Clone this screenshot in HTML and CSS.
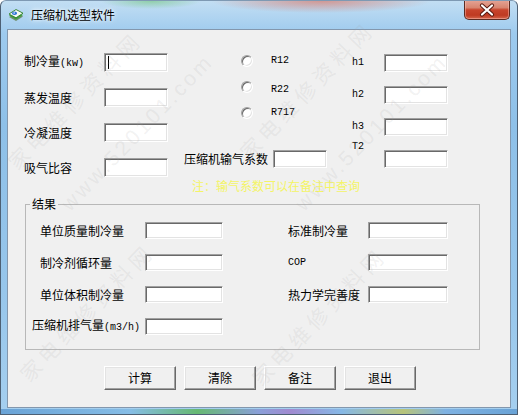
FILE: index.html
```html
<!DOCTYPE html>
<html lang="zh">
<head>
<meta charset="utf-8">
<title>压缩机选型软件</title>
<link rel="stylesheet" href="styles.css">
</head>
<body>
<div class="window">
  <div class="titlebar">
    <svg class="appicon" width="16" height="16" viewBox="0 0 16 16">
      <path d="M1 10 L8 6 L15 9.5 L8 14 Z" fill="#6f8f6f"/>
      <path d="M1 8.5 L8 4.5 L15 8 L8 12.5 Z" fill="#3f9f3a"/>
      <path d="M1 7 L8 2.5 L15 6.2 L8 10.8 Z" fill="#f4faf2" stroke="#2f7f2a" stroke-width="0.9"/>
      <ellipse cx="6.5" cy="6.3" rx="2.6" ry="1.8" fill="#2a6fd6"/>
      <ellipse cx="6.2" cy="6" rx="1" ry="0.7" fill="#cfe2ff"/>
    </svg>
    <span class="title">压缩机选型软件</span>
    <div class="close">
      <svg width="44" height="18" viewBox="0 0 44 18">
        <path d="M17 4.5 L27 13.5 M27 4.5 L17 13.5" stroke="#5a1a10" stroke-width="4.2" stroke-linecap="round"/>
        <path d="M17 4.5 L27 13.5 M27 4.5 L17 13.5" stroke="#ffffff" stroke-width="2.2" stroke-linecap="round"/>
      </svg>
    </div>
  </div>

  <div class="client">
    <div class="top">
      <div class="col-left">
        <div class="row"><span class="lbl">制冷量<span class="lat">(kw)</span></span><span class="input"><span class="caret"></span></span></div>
        <div class="row"><span class="lbl">蒸发温度</span><span class="input"></span></div>
        <div class="row"><span class="lbl">冷凝温度</span><span class="input"></span></div>
        <div class="row"><span class="lbl">吸气比容</span><span class="input"></span></div>
      </div>
      <div class="col-mid">
        <div class="radios">
          <div class="radio-row"><span class="radio"></span><span class="lat">R12</span></div>
          <div class="radio-row"><span class="radio"></span><span class="lat low">R22</span></div>
          <div class="radio-row"><span class="radio"></span><span class="lat">R717</span></div>
        </div>
        <div class="row mid-row"><span class="lbl">压缩机输气系数</span><span class="input"></span></div>
      </div>
      <div class="col-right">
        <div class="row"><span class="lbl lat">h1</span><span class="input"></span></div>
        <div class="row"><span class="lbl lat">h2</span><span class="input"></span></div>
        <div class="row"><span class="lbl lat">h3</span><span class="input"></span></div>
        <div class="row"><span class="lbl lat up">T2</span><span class="input"></span></div>
      </div>
    </div>

    <div class="note">注：输气系数可以在备注中查询</div>

    <fieldset class="group">
      <legend>结果</legend>
      <div class="rgrid">
        <span class="lbl">单位质量制冷量</span><span class="input w78"></span><span></span>
        <span class="lbl">标准制冷量</span><span class="input w80"></span>

        <span class="lbl">制冷剂循环量</span><span class="input w78"></span><span></span>
        <span class="lbl lat">COP</span><span class="input w80"></span>

        <span class="lbl">单位体积制冷量</span><span class="input w78"></span><span></span>
        <span class="lbl">热力学完善度</span><span class="input w80"></span>

        <span class="lbl shift">压缩机排气量<span class="lat">(m3/h)</span></span><span class="input w78"></span><span></span>
        <span></span><span></span>
      </div>
    </fieldset>

    <div class="buttons">
      <button class="btn">计算</button>
      <button class="btn">清除</button>
      <button class="btn">备注</button>
      <button class="btn">退出</button>
    </div>
  </div>

  <span class="wm cjk" style="left:18px;top:150px">家电维修资料网</span>
  <span class="wm" style="left:72px;top:192px">www.520101.com</span>
  <span class="wm cjk" style="left:250px;top:140px">家电维修资料网</span>
  <span class="wm" style="left:306px;top:192px">www.520101.com</span>
  <span class="wm cjk" style="left:30px;top:362px">家电维修资料网</span>
  <span class="wm cjk" style="left:262px;top:366px">家电维修资料网</span>
</div>
</body>
</html>
```

FILE: styles.css
```css
html, body {
  margin: 0;
  padding: 0;
  background: #ffffff;
}

.window {
  position: relative;
  width: 518px;
  height: 415px;
  box-sizing: border-box;
  border: 1px solid #4d6074;
  border-top-color: #7e99b3;
  border-radius: 6px 6px 0 0;
  overflow: hidden;
  display: flex;
  flex-direction: column;
  font-family: "Noto Sans CJK SC", sans-serif;
  font-size: 12px;
  color: #000;
  background:
    linear-gradient(90deg, #6aa3d6 0%, #86bde6 25%, #66b872 38%, #8a9fd8 50%, #a08ad0 56%, #86b8e6 66%, #b7c47a 78%, #7fb2e2 86%, #6aa3d6 100%) left bottom / 100% 5px no-repeat,
    radial-gradient(ellipse 110px 12px at 320px 0, rgba(214, 128, 116, 0.75), rgba(214, 128, 116, 0) 100%),
    radial-gradient(ellipse 50px 8px at 150px 0, rgba(110, 196, 120, 0.6), rgba(110, 196, 120, 0) 100%),
    linear-gradient(180deg, #c2def3 0%, #9dcaee 8%, #8ec0e8 30%, #97c6eb 70%, #a5cfef 100%);
}

/* Title bar */
.titlebar {
  height: 28px;
  flex: none;
  display: flex;
  align-items: center;
  padding-left: 7px;
}

.appicon {
  align-self: flex-start;
  margin-top: 6px;
  flex: none;
}

.title {
  margin-left: 7px;
  font-size: 12px;
  line-height: 14px;
  color: #000;
  text-shadow: 0 0 6px rgba(255, 255, 255, 0.95), 0 0 3px rgba(255, 255, 255, 0.9);
}

.close {
  align-self: flex-start;
  margin: -1px 7px 0 auto;
  width: 46px;
  height: 20px;
  box-sizing: border-box;
  border: 1px solid #5b2b22;
  border-top: none;
  border-radius: 0 0 5px 5px;
  background: linear-gradient(180deg, #e5a597 0%, #d88570 40%, #c8442c 52%, #bf3a22 80%, #d5664c 100%);
  box-shadow: inset 0 0 0 1px rgba(255, 200, 190, 0.45);
  display: flex;
  align-items: center;
  justify-content: center;
}

/* Client area */
.client {
  flex: 1;
  margin: 0 6px 6px 6px;
  border: 1px solid #8397ad;
  background: #f0f0f0;
  display: flex;
  flex-direction: column;
}

.lbl {
  font-size: 12px;
  line-height: 12px;
  white-space: nowrap;
}

.lat {
  font-family: "Liberation Mono", "DejaVu Sans Mono", monospace;
  font-size: 10px;
  line-height: 12px;
}

.input {
  display: block;
  box-sizing: border-box;
  background: #ffffff;
  border-top: 1px solid #a0a0a0;
  border-left: 1px solid #a0a0a0;
  border-right: 1px solid #ffffff;
  border-bottom: 1px solid #ffffff;
  box-shadow: inset 1px 1px 0 #696969, inset -1px -1px 0 #e3e3e3;
  flex: none;
}

.caret {
  display: block;
  width: 1px;
  height: 13px;
  margin: 2px 0 0 3px;
  background: #000;
}

.row {
  display: flex;
  align-items: center;
}

.top {
  display: flex;
  align-items: flex-start;
  padding: 23px 0 0 16px;
}

.col-left {
  width: 144px;
  display: flex;
  flex-direction: column;
  gap: 16px;
}

.col-left .lbl {
  width: 80px;
}

.col-left .input {
  width: 64px;
  height: 19px;
}

.col-mid {
  margin-left: 16px;
  width: 143px;
  display: flex;
  flex-direction: column;
}

.radios {
  margin-top: 2px;
  padding-left: 57px;
  display: flex;
  flex-direction: column;
  gap: 14px;
}

.radio-row {
  height: 12px;
  display: flex;
  align-items: center;
  gap: 18px;
}

.radio {
  display: block;
  width: 12px;
  height: 12px;
  box-sizing: border-box;
  border-radius: 50%;
  border: 1px solid;
  border-color: #a0a0a0 #ffffff #ffffff #a0a0a0;
  background: #ffffff;
  box-shadow: inset 1px 1px 0 #696969, inset -1px -1px 0 #e3e3e3;
}

.low {
  margin-top: 6px;
}

.mid-row {
  margin-top: 31px;
}

.mid-row .input {
  width: 54px;
  height: 18px;
  margin-left: 5px;
}

.col-right {
  margin-left: 25px;
  margin-top: 1px;
  display: flex;
  flex-direction: column;
  gap: 14px;
}

.col-right .lbl {
  width: 32px;
}

.col-right .input {
  width: 64px;
  height: 18px;
}

.col-right .up {
  align-self: flex-start;
  margin-top: -9px;
}

.note {
  margin: 3px 0 0 184px;
  height: 12px;
  line-height: 12px;
  font-size: 12px;
  color: #f4f466;
  white-space: nowrap;
}

/* Group box */
.group {
  margin: 6px 0 0 17px;
  width: 455px;
  box-sizing: border-box;
  padding: 12px 0 14px 0;
  border: 1px solid #b8b8b8;
  min-inline-size: 0;
}

.group legend {
  padding: 0 2px;
  margin-left: 4px;
  font-size: 12px;
  line-height: 12px;
}

.rgrid {
  display: grid;
  grid-template-columns: 105px 78px 65px 80px 80px;
  grid-auto-rows: 17px;
  row-gap: 15px;
  align-items: center;
  padding-left: 14px;
}

.rgrid .w78 {
  width: 78px;
  height: 17px;
}

.rgrid .w80 {
  width: 80px;
  height: 17px;
}

.rgrid .shift {
  margin-left: -8px;
}

/* Buttons */
.buttons {
  margin-top: 16px;
  padding-left: 96px;
  display: flex;
  gap: 8px;
}

.btn {
  width: 72px;
  height: 24px;
  box-sizing: border-box;
  padding: 0;
  margin: 0;
  font-family: "Noto Sans CJK SC", sans-serif;
  font-size: 12px;
  line-height: 12px;
  color: #000;
  background: #f0f0f0;
  border: 1px solid;
  border-color: #ffffff #696969 #696969 #ffffff;
  box-shadow: inset -1px -1px 0 #a0a0a0, inset 1px 1px 0 #e3e3e3;
  border-radius: 0;
}

/* Watermark overlay */
.wm {
  position: absolute;
  z-index: 5;
  pointer-events: none;
  white-space: nowrap;
  font-family: "Liberation Sans", sans-serif;
  font-size: 21px;
  line-height: 22px;
  letter-spacing: 3px;
  color: rgba(165, 165, 165, 0.15);
  transform-origin: 0 100%;
  transform: rotate(-46deg);
}

.wm.cjk {
  font-family: "Noto Sans CJK SC", sans-serif;
  letter-spacing: 5px;
}
```
